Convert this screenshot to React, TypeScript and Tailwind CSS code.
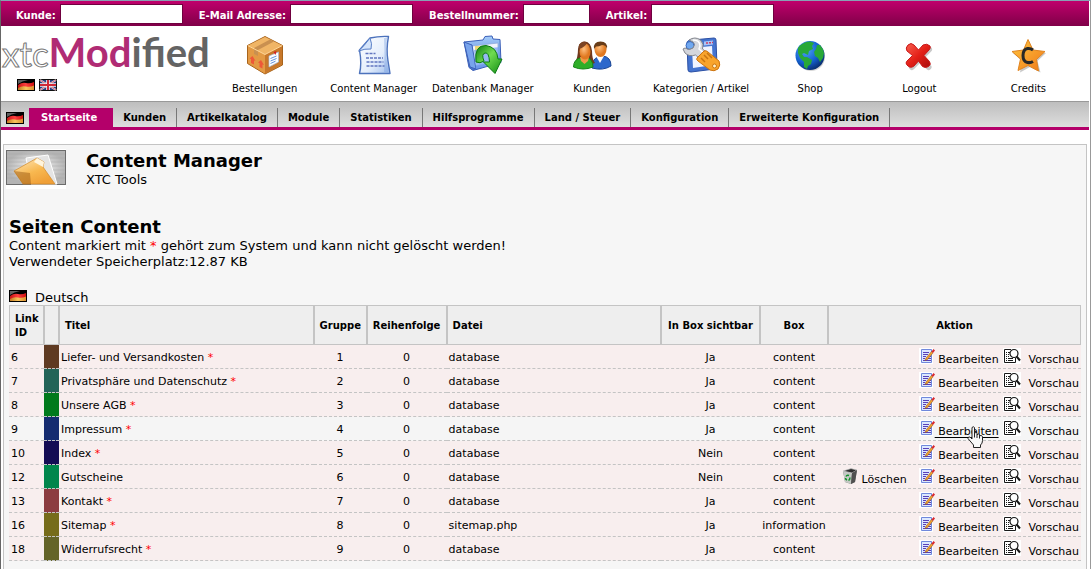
import { clsx } from 'clsx';
import type { ReactNode } from 'react';

function FlagDE() {
  return (
    <svg width="18" height="12" viewBox="0 0 18 12" className="shrink-0" aria-label="Deutsch">
      <defs>
        <linearGradient id="deGold" x1="0" y1="0" x2="1" y2="0">
          <stop offset="0" stopColor="#c07820" />
          <stop offset="0.500" stopColor="#f8c45c" />
          <stop offset="1" stopColor="#d89030" />
        </linearGradient>
        <linearGradient id="deRed" x1="0" y1="0" x2="1" y2="0">
          <stop offset="0" stopColor="#c81414" />
          <stop offset="0.500" stopColor="#ff4040" />
          <stop offset="1" stopColor="#cc1010" />
        </linearGradient>
      </defs>
      <rect width="18" height="12" fill="#000" />
      <path d="M1 1h10Q5 2 1 5z" fill="#606060" />
      <path d="M1 6Q5 3 9 4t8-1v6H1z" fill="url(#deRed)" />
      <path d="M1 9Q5 6.500 9 7.500t8-1V11H1z" fill="url(#deGold)" />
    </svg>
  );
}

function FlagUK() {
  return (
    <svg width="18" height="12" viewBox="0 0 18 12" className="shrink-0" aria-label="English">
      <rect width="18" height="12" fill="#101010" />
      <rect x="1" y="1" width="16" height="10" fill="#283c80" />
      <path d="M1 1l16 10M17 1L1 11" stroke="#e8e8f0" strokeWidth="2" />
      <path d="M1 1l16 10M17 1L1 11" stroke="#d04050" strokeWidth="0.800" />
      <path d="M9 1v10M1 6h16" stroke="#f4f4f8" strokeWidth="3.600" />
      <path d="M9 1v10M1 6h16" stroke="#d02838" strokeWidth="2" />
    </svg>
  );
}

function BoxIcon() {
  return (
    <svg width="40" height="40" viewBox="0 0 40 40">
      <path d="M20 1.500L37.500 10.500V30L20 39 2.500 28.500V10.500z" fill="#d98a35" stroke="#a8641c" strokeLinejoin="round" />
      <path d="M20 2L37 10.500 20 19.500 3 10.500z" fill="#f0b566" />
      <path d="M3 11l17 8.500v19L3 28z" fill="#e39a44" />
      <path d="M20 19.500L37 11v18.500l-17 9z" fill="#c8782a" />
      <path d="M25 4.500l4 2L13 15v6l-4-2v-6z" fill="#c99050" />
      <path d="M3 10.700l17 8.800 17-8.800" fill="none" stroke="#ffd79a" />
      <path d="M7.500 21l3 5-1.500-.5v4l-3-1.500v-4l-1.500-.5zM16 25l3 5-1.500-.5v4l-3-1.500v-4L13 27.500z" fill="#ee5838" />
      <path d="M24 21l9.500-4v10L24 32z" fill="#fff" stroke="#a8bcd8" strokeWidth="0.700" />
      <path d="M25.500 23.500l6-2.500M25.500 26l6-2.500M25.500 28.500l5-2.300" stroke="#5f92dc" />
      <path d="M28.500 17l2 3 1-4z" fill="#d82020" />
    </svg>
  );
}

function PaperIcon() {
  return (
    <svg width="40" height="40" viewBox="0 0 40 40">
      <defs>
        <linearGradient id="paper" x1="0" y1="0" x2="1" y2="1">
          <stop offset="0" stopColor="#fff" />
          <stop offset="0.600" stopColor="#e4eefc" />
          <stop offset="1" stopColor="#9cbcec" />
        </linearGradient>
      </defs>
      <path d="M16 3Q25 1 34.500 1.500 32 14 34 26T36 38.500H5.500Q8 29 5.500 15z" fill="url(#paper)" stroke="#4c72bc" strokeWidth="1.400" strokeLinejoin="round" />
      <path d="M16 3q2.500 6 1 11-6-.5-12.500 2 5-4 11.500-13z" fill="#d4e4fa" stroke="#5a80c8" />
      <path d="M33 3q-2 14 0 24l1.500 10H30q1-18 0-34z" fill="#6f98dc" opacity=".35" />
      <path d="M11.500 18.500h10M12 23h17M12.500 27h17M12.500 31h18" stroke="#6076c0" strokeWidth="1.600" strokeDasharray="3 1" />
    </svg>
  );
}

function FolderArrowIcon() {
  return (
    <svg width="40" height="40" viewBox="0 0 40 40">
      <defs>
        <linearGradient id="folder" x1="0" y1="0" x2="0" y2="1">
          <stop offset="0" stopColor="#a4ccfa" />
          <stop offset="1" stopColor="#4870cc" />
        </linearGradient>
        <linearGradient id="arrow" x1="0" y1="0" x2="1" y2="1">
          <stop offset="0" stopColor="#0c7c10" />
          <stop offset="0.450" stopColor="#70dc50" />
          <stop offset="1" stopColor="#128c14" />
        </linearGradient>
      </defs>
      <path d="M1 7l19-2 2-3.500 7-.5 1 3 7 .5 1 23-28 8-4-3z" fill="url(#folder)" stroke="#3c60b8" />
      <path d="M9 11l26-3v18l-24 5z" fill="#f0f4fc" stroke="#88a4d8" strokeWidth="0.700" />
      <path d="M12 11h10v9H12z" fill="#ecd878" />
      <path d="M1 7l8 3 4 24-6-2z" fill="#78a4ec" stroke="#3c60b8" />
      <path d="M11 15l26-3-2 16-22 6z" fill="#78a4f0" opacity=".75" />
      <path d="M13 27Q11 10 23 10.500 34 12 35 24h4L32 38.500 20.500 27h6Q26 17 22 18T21 26q-4 3-8 1z" fill="url(#arrow)" stroke="#0c7c14" />
    </svg>
  );
}

function CustomersIcon() {
  return (
    <svg width="40" height="40" viewBox="0 0 40 40">
      <defs>
        <radialGradient id="face" cx="0.400" cy="0.350">
          <stop offset="0" stopColor="#ffc080" />
          <stop offset="1" stopColor="#e07820" />
        </radialGradient>
      </defs>
      <path d="M20 33q0-9 6-11l5-1q8 1 8 10-8 5-19 2z" fill="#2c68cc" stroke="#184494" />
      <path d="M24 21l4 7 4-7z" fill="#fff" />
      <ellipse cx="28.500" cy="14.500" rx="6" ry="7.500" fill="url(#face)" />
      <path d="M22 14Q21 6.500 28.500 6.500T35 14q-1-4-5-4-3 1.500-6 1.500z" fill="#683c18" />
      <path d="M3 28Q6 22 6 14 7 6 13 6.500 19 7 20 16q0 8 3 12l-10 3z" fill="#70381c" />
      <path d="M1.500 32q0-8 8-9.500h5Q21 24 21 32q-10 4-19.500 0z" fill="#2fae28" stroke="#168418" />
      <path d="M8 22h9l-1 4-3.500 3L9 26z" fill="#f09848" />
      <ellipse cx="13" cy="16.500" rx="5.500" ry="8" fill="url(#face)" />
      <path d="M7 14q6-2 8-6 3 2 3 7V10l-6-3.500-5 3z" fill="#7c4424" />
    </svg>
  );
}

function ToolsIcon() {
  return (
    <svg width="40" height="40" viewBox="0 0 40 40">
      <path d="M11 5l22-2q2 0 2 2l1 26q0 2-2 3L10 37q-3 0-3-2L6 8q0-3 5-3z" fill="#4474d0" stroke="#2c50a4" />
      <path d="M11 13l20-2 1 19-20 3z" fill="#f0f4ff" />
      <path d="M23 6.500l9-1v4l-9 1z" fill="#a8c4f8" />
      <path d="M25 8h2m1-.3h2m1-.2h1" stroke="#cc4060" strokeWidth="1.500" />
      <circle cx="9" cy="10.500" r="4" fill="#70a8f0" stroke="#3868bc" />
      <path d="M8 5Q14 1 19.500 5q4 4 2 9l5 4-6 7-6-5Q8 22 4 18l-2-4 2-1q4 3 8 0 3-4 0-6z" fill="#d4d6dc" stroke="#84878e" />
      <path d="M12 5q7 0 7 6l-1 3 6 5" fill="none" stroke="#fff" strokeWidth="1.500" />
      <path d="M16 23l7-7q2-1 4 1l11 9q2 4-1 8-4 3-8 1L17 26q-2-1-1-3z" fill="#f8a42c" stroke="#cc7410" />
      <path d="M20 23l4 4m-1-7l4 4m-1-6l5 5" stroke="#c87410" strokeWidth="1.500" />
      <circle cx="33.500" cy="31" r="2" fill="#fff0c8" stroke="#cc7410" />
    </svg>
  );
}

function GlobeIcon() {
  return (
    <svg width="40" height="40" viewBox="0 0 40 40">
      <defs>
        <radialGradient id="globe" cx="0.350" cy="0.300" r="0.750">
          <stop offset="0" stopColor="#50a8f8" />
          <stop offset="0.600" stopColor="#1460d0" />
          <stop offset="1" stopColor="#082c6c" />
        </radialGradient>
      </defs>
      <circle cx="21" cy="22" r="14" fill="#999" opacity=".4" />
      <circle cx="20" cy="20.500" r="14.500" fill="url(#globe)" />
      <path d="M8 13Q12 7 20 6.500l4 1.500-2 3 1 3-4 2-1 4-4-2-2 1 2 3 3 0 5 3-1 4-3 2-1 3-3-2 0-5-4-4-2-5q0-2 0-5z" fill="#28a838" />
      <path d="M27 10l3 0q3 3 4 8l-1 5-3 4-2-4-3-2-1-4 2-3z" fill="#28a838" />
    </svg>
  );
}

function LogoutIcon() {
  return (
    <svg width="40" height="40" viewBox="0 0 40 40">
      <defs>
        <linearGradient id="cross" x1="0" y1="0" x2="1" y2="1">
          <stop offset="0" stopColor="#f86050" />
          <stop offset="0.500" stopColor="#e42018" />
          <stop offset="1" stopColor="#a80c0c" />
        </linearGradient>
      </defs>
      <path d="M13 14.500L29.500 32M30 14.500L13 32" stroke="#777" strokeWidth="6" strokeLinecap="round" opacity=".4" />
      <path
        d="M9 10q3-3 6 0l4.500 5L24 10q4-2 7 1 1 2-1 4l-5 5.500 5.500 6q2 3-1 5-3 2-6 0L19.500 26 15 31q-4 3-7-1-2-2 0-4l5.500-5.500L8 16q-2-3 1-6z"
        fill="url(#cross)"
        stroke="#c81818"
      />
    </svg>
  );
}

function CreditsIcon() {
  return (
    <svg width="40" height="40" viewBox="0 0 40 40">
      <defs>
        <linearGradient id="star" x1="0" y1="0" x2="1" y2="1">
          <stop offset="0" stopColor="#ffc840" />
          <stop offset="1" stopColor="#f07818" />
        </linearGradient>
      </defs>
      <path d="M21 6l5 10.500 12 1.500-8.500 8 3 11.500L22 32 12 37.500 14 26 5 18l12-1.500z" fill="#777" opacity=".4" />
      <path d="M20 4.500l5 10.500 12 1.500-8.500 8 2 11.500L20 30.500 10 35.500 12.500 24 4 16.500 15.500 15z" fill="url(#star)" stroke="#e08420" strokeLinejoin="round" />
      <path d="M25 15q-2.500-2-5.500-1.500-4.500 1-4.500 7t4.500 7q3 .5 5.500-1" fill="none" stroke="#282828" strokeWidth="3" />
    </svg>
  );
}

function ContentImage() {
  return (
    <svg width="60" height="40" viewBox="0 0 60 40" className="shrink-0 bg-white">
      <defs>
        <linearGradient id="sheet" x1="0" y1="0" x2="0.600" y2="1">
          <stop offset="0" stopColor="#ffeac0" />
          <stop offset="0.600" stopColor="#f8b850" />
          <stop offset="1" stopColor="#f0a038" />
        </linearGradient>
        <radialGradient id="glow">
          <stop offset="0" stopColor="#fff" />
          <stop offset="1" stopColor="#b4b4b4" />
        </radialGradient>
      </defs>
      <rect x="0.500" y="1.500" width="59" height="34" fill="url(#glow)" stroke="#6c6c6c" />
      <path d="M1 5h58M1 9h58M1 13h58M1 17h58M1 21h58M1 25h58M1 29h58" stroke="#a4a4a4" strokeWidth="0.500" />
      <path d="M20 9l22-3 9 29H25z" fill="#e4e4e4" stroke="#fff" />
      <path d="M8 22L31 9l7 4-1 5 12 17H17z" fill="url(#sheet)" stroke="#d08828" strokeWidth="0.700" />
      <path d="M8 22l16 2 1 11h-8z" fill="#9c5c18" opacity=".5" />
      <path d="M31 9l7 4-1 5-9-5z" fill="#fff4dc" />
    </svg>
  );
}

function EditIcon() {
  return (
    <svg width="16" height="16" viewBox="0 0 16 16">
      <path d="M0 0h14v16H0z" fill="#fff" />
      <path d="M2.500 1.500h10v13h-10z" fill="#dce8ff" stroke="#7088dc" />
      <path d="M4 4.500h6M4 6.500h5M4 8.500h3M10 8.500h2M4 10.500h2M9 10.500h3M4 12.500h8" stroke="#5840b8" />
      <path d="M7 10l-1 2.500 2.500-1L14 5l-1.500-1.500z" fill="#f0a030" stroke="#905010" strokeWidth="0.500" />
      <path d="M12.500 3.500L14.500 1 16 2.500 14 5z" fill="#d82830" />
    </svg>
  );
}

function PreviewIcon() {
  return (
    <svg width="18" height="16" viewBox="0 0 18 16">
      <rect width="18" height="16" fill="#fff" />
      <path d="M8 1.500H1.500v13h11V10" fill="none" stroke="#181818" />
      <path d="M3 4.500h1m1 0h2M3 6.500h1m1 0h1M3 8.500h1m1 0h1M3 10.500h1m1 0h5M3 12.500h1m1 0h5" stroke="#181818" />
      <circle cx="11" cy="5.500" r="4" fill="#fff" stroke="#181818" strokeWidth="1.200" />
      <path d="M13.500 8.500l3.500 4" stroke="#181818" strokeWidth="2" />
    </svg>
  );
}

function TrashIcon() {
  return (
    <svg width="16" height="16" viewBox="0 0 16 16">
      <path d="M1 3l8-2.500L15 2l-2 12-4 2-6-2z" fill="#747474" />
      <path d="M1 3l9 2-1 11-6-2z" fill="#c4c8c4" />
      <path d="M1 3l8-2.500L15 2l-5 3z" fill="#303030" stroke="#d8d8d8" strokeWidth="0.700" />
      <path d="M10 5l5-3-2 12-4 2z" fill="#505050" />
      <path d="M4 8.500Q5 6.500 7 7.500M8 9.500q0 2-1.500 3M5 12q-1.500-.5-1.500-2" fill="none" stroke="#109028" strokeWidth="1.500" />
    </svg>
  );
}

function HandCursor() {
  return (
    <svg width="18" height="22" viewBox="0 0 18 22" className="pointer-events-none absolute top-1.5 left-8">
      <path
        d="M5 1.500q1.500-1.500 2.500 0V8q0-2.500 2.500-1.500V9q1-2 2.500-.5V10q1.500-1.500 3 .5v4q0 3-2 4.500v2.500H6.500V19L1 12.500q0-2 2-1.500l2 2z"
        fill="#f8f8f8"
        stroke="#222"
      />
      <path d="M7.500 8v3.500M10 9v3M12.500 10v2.500" stroke="#222" />
    </svg>
  );
}

const searchFields = [
  { id: 'kunde', label: 'Kunde:', width: 'w-[123px]' },
  { id: 'email', label: 'E-Mail Adresse:', width: 'w-[123px]' },
  { id: 'bestellnummer', label: 'Bestellnummer:', width: 'w-[67px]' },
  { id: 'artikel', label: 'Artikel:', width: 'w-[123px]' },
];

const shortcuts: { label: string; icon: ReactNode }[] = [
  { label: 'Bestellungen', icon: <BoxIcon /> },
  { label: 'Content Manager', icon: <PaperIcon /> },
  { label: 'Datenbank Manager', icon: <FolderArrowIcon /> },
  { label: 'Kunden', icon: <CustomersIcon /> },
  { label: 'Kategorien / Artikel', icon: <ToolsIcon /> },
  { label: 'Shop', icon: <GlobeIcon /> },
  { label: 'Logout', icon: <LogoutIcon /> },
  { label: 'Credits', icon: <CreditsIcon /> },
];

const menu = [
  'Kunden', 'Artikelkatalog', 'Module', 'Statistiken', 'Hilfsprogramme',
  'Land / Steuer', 'Konfiguration', 'Erweiterte Konfiguration',
];

const rows = [
  { id: 6, color: 'bg-[#5f3a22]', title: 'Liefer- und Versandkosten', file: 'database', visible: 'Ja', box: 'content', system: true },
  { id: 7, color: 'bg-[#236458]', title: 'Privatsphäre und Datenschutz', file: 'database', visible: 'Ja', box: 'content', system: true },
  { id: 8, color: 'bg-[#007a1c]', title: 'Unsere AGB', file: 'database', visible: 'Ja', box: 'content', system: true },
  { id: 9, color: 'bg-[#142c70]', title: 'Impressum', file: 'database', visible: 'Ja', box: 'content', system: true, active: true },
  { id: 10, color: 'bg-[#140c54]', title: 'Index', file: 'database', visible: 'Nein', box: 'content', system: true },
  { id: 12, color: 'bg-[#00864c]', title: 'Gutscheine', file: 'database', visible: 'Nein', box: 'content', system: false },
  { id: 13, color: 'bg-[#8c3c40]', title: 'Kontakt', file: 'database', visible: 'Ja', box: 'content', system: true },
  { id: 16, color: 'bg-[#766c1a]', title: 'Sitemap', file: 'sitemap.php', visible: 'Ja', box: 'information', system: true },
  { id: 18, color: 'bg-[#646428]', title: 'Widerrufsrecht', file: 'database', visible: 'Ja', box: 'content', system: true },
];

const th = 'border border-[#c4c4c4] px-[5px] pt-[2px] text-[10px] leading-[14px] font-bold';
const line = 'border-b border-dashed border-[#c4c4c4]';
const td = 'border-b border-dashed border-[#c4c4c4] px-[2px] pt-[2px]';

function Header() {
  return (
    <header>
      <form className="flex h-[25px] items-center gap-4 bg-linear-to-b from-[#c0006c] to-[#800048] pl-[15px]">
        {searchFields.map((f) => (
          <div key={f.id} className="flex items-center gap-1">
            <label htmlFor={f.id} className="pt-1 text-[10px] leading-[14px] font-bold whitespace-nowrap text-white">
              {f.label}
            </label>
            <input id={f.id} type="text" className={clsx('h-5 border border-[#70003f] bg-white px-1 text-[11px] outline-none', f.width)} />
          </div>
        ))}
      </form>

      <div className="flex h-[75px] bg-white">
        <div className="w-[209px] shrink-0">
          <a href="#" className="flex items-baseline pl-px pt-1 font-[Lato,sans-serif] text-[40px] leading-[44px]">
            <span className="text-[35px] text-white [-webkit-text-stroke:1px_#777]">xtc</span>
            <span className="font-bold text-[#b02c74]">Mod</span>
            <span className="font-bold text-[#646464]">ified</span>
          </a>
          <div className="flex gap-1 pt-1 pl-4">
            <a href="#"><FlagDE /></a>
            <a href="#"><FlagUK /></a>
          </div>
        </div>
        <div className="grid flex-1 grid-cols-8 pr-[6px] pt-[9px]">
          {shortcuts.map((s) => (
            <a key={s.label} href="#" className="flex flex-col items-center gap-[7px] text-[10px] leading-[14px] whitespace-nowrap">
              {s.icon}
              <span>{s.label}</span>
            </a>
          ))}
        </div>
      </div>

      <nav className="flex h-[29px] items-end border-t border-b-3 border-t-[#999] border-b-[#b4006a] bg-linear-to-b from-[#bebebe] to-[#dedede] pl-[5px] text-[10px] leading-[19px] font-bold">
        <a href="#" className="mr-[5px] flex h-[19px] items-center"><FlagDE /></a>
        <a href="#" className="bg-[#b4006a] pr-4 pl-3 text-white">Startseite</a>
        {menu.map((m) => (
          <a key={m} href="#" className="border-r border-[#777] px-[10px] whitespace-nowrap">{m}</a>
        ))}
      </nav>
    </header>
  );
}

function ContentTable() {
  return (
    <table className="w-full table-fixed border-separate border-spacing-0 text-[11px] leading-[14px]">
      <colgroup>
        <col className="w-[35px]" />
        <col className="w-[15px]" />
        <col />
        <col className="w-[53px]" />
        <col className="w-[80px]" />
        <col className="w-[20%]" />
        <col className="w-[99px]" />
        <col className="w-[68px]" />
        <col className="w-[253px]" />
      </colgroup>
      <thead>
        <tr className="h-10 bg-[#eee]">
          <th className={clsx(th, 'text-left')}>Link ID</th>
          <th className={th} />
          <th className={clsx(th, 'text-left')}>Titel</th>
          <th className={th}>Gruppe</th>
          <th className={th}>Reihenfolge</th>
          <th className={clsx(th, 'text-left')}>Datei</th>
          <th className={clsx(th, 'whitespace-nowrap')}>In Box sichtbar</th>
          <th className={th}>Box</th>
          <th className={th}>Aktion</th>
        </tr>
      </thead>
      <tbody>
        {rows.map((row, i) => (
          <tr key={row.id} className={clsx('h-6', row.active ? 'bg-[#f5f5f5]' : 'bg-[#f8eeee]')}>
            <td className={td}>{row.id}</td>
            <td className={clsx(td, row.color)} />
            <td className={td}>
              {row.title} {row.system && <span className="text-[#ff0000]">*</span>}
            </td>
            <td className={clsx(td, 'text-center')}>{i + 1}</td>
            <td className={clsx(td, 'text-center')}>0</td>
            <td className={td}>{row.file}</td>
            <td className={clsx(td, 'text-center')}>{row.visible}</td>
            <td className={clsx(td, 'text-center')}>{row.box}</td>
            <td className={clsx(line, 'pr-[2px]')}>
              <div className="flex h-[23px] items-start justify-end pt-[3px] whitespace-nowrap">
                {!row.system && (
                  <a href="#" className="mr-3 flex items-start gap-1">
                    <TrashIcon />
                    <span className="pt-[5px]">Löschen</span>
                  </a>
                )}
                <a href="#" className="mr-1 flex items-start">
                  <EditIcon />
                  <span className={clsx('relative pt-[5px]', row.active && 'underline underline-offset-2')}>
                    &nbsp;Bearbeiten
                    {row.active && <HandCursor />}
                  </span>
                </a>
                <a href="#" className="flex items-start gap-2">
                  <PreviewIcon />
                  <span className="pt-[5px]">Vorschau</span>
                </a>
              </div>
            </td>
          </tr>
        ))}
      </tbody>
    </table>
  );
}

export default function App() {
  return (
    <div className="flex min-h-screen flex-col border-t border-r border-l border-t-[#88a0b4] border-r-[#999] border-l-[#666] bg-white pr-px font-['DejaVu_Sans',Verdana,sans-serif] text-black">
      <Header />
      <main className="mx-[2px] mt-[14px] flex-1 border-x border-t border-[#c4c4c4] bg-[#f6f6f6] px-[5px] pt-1">
        <div className="-ml-[3px] flex gap-5">
          <ContentImage />
          <div className="pt-px">
            <h1 className="text-[18px] leading-[22px] font-bold">Content Manager</h1>
            <p className="text-[13px] leading-4">XTC Tools</p>
          </div>
        </div>
        <h2 className="mt-[27px] text-[18px] leading-[22px] font-bold">Seiten Content</h2>
        <p className="text-[13px] leading-4">
          Content markiert mit <span className="text-[#ff0000]">*</span> gehört zum System und kann nicht gelöscht werden!
        </p>
        <p className="text-[13px] leading-4">Verwendeter Speicherplatz:12.87 KB</p>
        <div className="mt-5 flex h-[15px] items-start gap-2 text-[13px] leading-4">
          <FlagDE />
          <span>Deutsch</span>
        </div>
        <ContentTable />
      </main>
    </div>
  );
}
